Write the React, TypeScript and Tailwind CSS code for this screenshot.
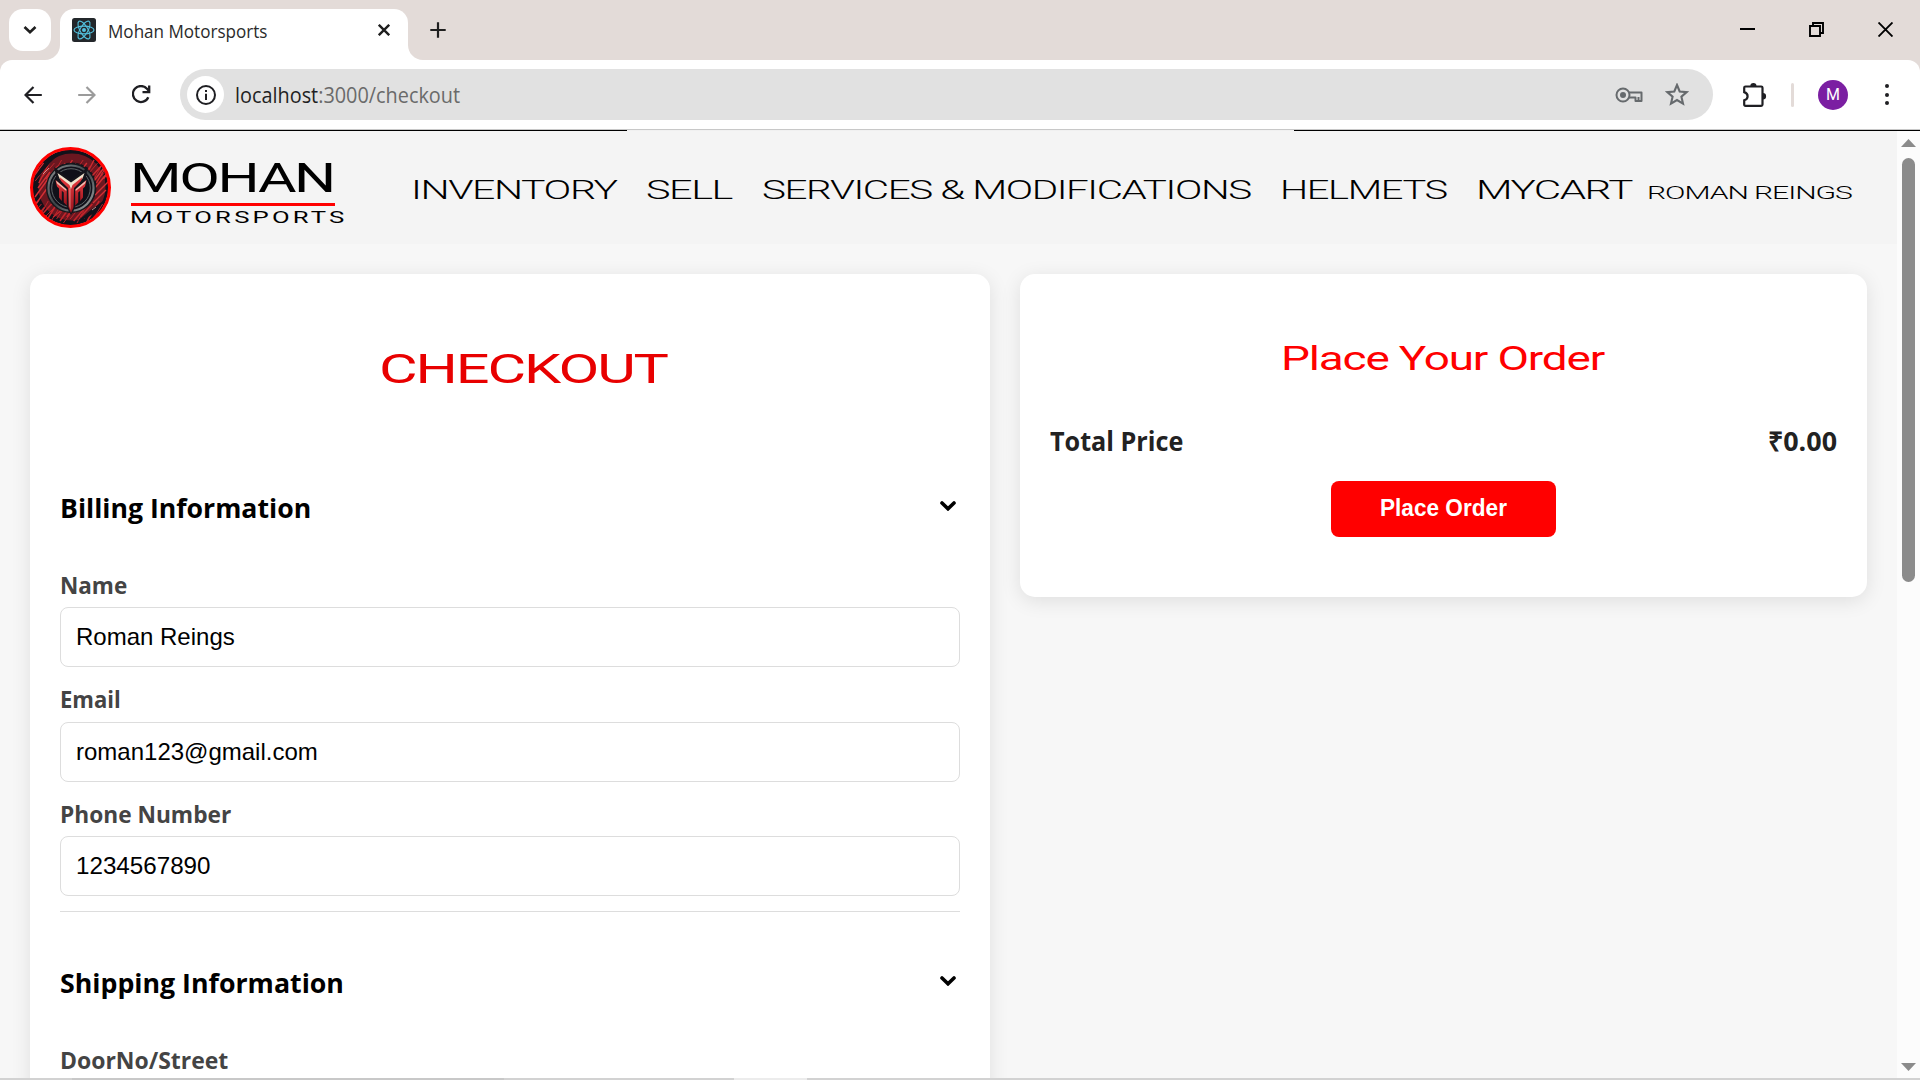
import React, { useLayoutEffect, useRef, useState } from "react";

/* One line of text stretched horizontally so that it fills its box. */
function Fit({ className, children }: { className: string; children: React.ReactNode }) {
  const box = useRef<HTMLDivElement>(null);
  const text = useRef<HTMLSpanElement>(null);
  const [scale, setScale] = useState(1);
  useLayoutEffect(() => {
    if (box.current && text.current && text.current.offsetWidth > 0) {
      setScale(box.current.getBoundingClientRect().width / text.current.offsetWidth);
    }
  }, []);
  return (
    <div ref={box} className={"shrink-0 whitespace-nowrap " + className}>
      <span ref={text} className="inline-block origin-left align-top" style={{ transform: `scaleX(${scale})` }}>
        {children}
      </span>
    </div>
  );
}

const WIDE = "font-['Roboto',sans-serif]";
const UI = "font-['Open_Sans',sans-serif]";
const ARIAL = "font-['Liberation_Sans',sans-serif]";

function TabStrip() {
  return (
    <div className="flex h-[60px] items-start bg-[#e3dbd8] pt-[9px]">
      <div className="ml-[9px] flex size-[42px] items-center justify-center rounded-[14px] bg-white">
        <svg width="14" height="10" viewBox="0 0 14 10" fill="none" stroke="#1f1f1f" strokeWidth="2.6">
          <path d="M1.5 2 7 7.3 12.500 2" />
        </svg>
      </div>
      <div className="relative ml-[9px] flex h-[51px] w-[348px] items-start rounded-t-[14px] bg-white pl-3">
        <svg className="absolute bottom-0 -left-[15px]" width="15" height="15" viewBox="0 0 15 15">
          <path d="M15 0V15H0C8.300 15 15 8.300 15 0Z" fill="#fff" />
        </svg>
        <svg className="absolute bottom-0 -right-[15px]" width="15" height="15" viewBox="0 0 15 15">
          <path d="M0 0V15H15C6.700 15 0 8.300 0 0Z" fill="#fff" />
        </svg>
        <svg className="mt-[9px]" width="24" height="24" viewBox="0 0 24 24" fill="none">
          <rect width="24" height="24" rx="2.500" fill="#23272b" />
          <g stroke="#53c1de" strokeWidth="1.100">
            <ellipse cx="12" cy="12" rx="10" ry="3.900" />
            <ellipse cx="12" cy="12" rx="10" ry="3.900" transform="rotate(60 12 12)" />
            <ellipse cx="12" cy="12" rx="10" ry="3.900" transform="rotate(120 12 12)" />
          </g>
          <circle cx="12" cy="12" r="2" fill="#53c1de" />
        </svg>
        <Fit className={"ml-[12px] mt-[7px] w-[160px] text-[17.500px] leading-[30px] text-[#2b2b2b] " + UI}>Mohan Motorsports</Fit>
        <svg className="ml-[110px] mt-[15px]" width="12" height="12" viewBox="0 0 12 12" stroke="#1f1f1f" strokeWidth="2.400">
          <path d="M.8.8 11.200 11.200M11.200.8.8 11.200" />
        </svg>
      </div>
      <svg className="ml-[22px] mt-[13px]" width="16" height="16" viewBox="0 0 16 16" stroke="#1f1f1f" strokeWidth="2.200">
        <path d="M8 .3V15.700M.3 8H15.700" />
      </svg>
      <div className="ml-auto flex items-center gap-[54px] pr-[27px] pt-[13px]">
        <svg width="15" height="15" viewBox="0 0 15 15"><path d="M0 6H15V8H0Z" fill="#000" /></svg>
        <svg width="15" height="15" viewBox="0 0 15 15" fill="none" stroke="#000" strokeWidth="1.900">
          <path d="M1 4H11V14H1ZM4 4V1H14V11H11" />
        </svg>
        <svg width="15" height="15" viewBox="0 0 15 15" stroke="#000" strokeWidth="1.900">
          <path d="M.5.5 14.500 14.500M14.500.5.5 14.500" />
        </svg>
      </div>
    </div>
  );
}

function Toolbar() {
  return (
    <div className="h-[69px] bg-[#e3dbd8]">
      <div className="flex h-full items-center rounded-t-[12px] bg-white pl-6">
        <svg width="18" height="18" viewBox="0 0 18 18" fill="none" stroke="#1f1f23" strokeWidth="2.200">
          <path d="M17.800 9H2M9.500 1 1.500 9 9.500 17" />
        </svg>
        <svg className="ml-9" width="18" height="18" viewBox="0 0 18 18" fill="none" stroke="#9b9b9b" strokeWidth="2.200">
          <path d="M.2 9H16M8.500 1 16.500 9 8.500 17" />
        </svg>
        <svg className="ml-9" width="19" height="19" viewBox="0 0 19 19" fill="none" stroke="#1f1f23" strokeWidth="2.300">
          <path d="M16.300 12.200A8 8 0 1 1 15 3.800L17.300 6.500" />
          <path d="M17.200.5V7.200H10.500" />
        </svg>
        <div className="ml-[29px] flex h-[51px] w-[1533px] shrink-0 items-center rounded-full bg-[#e1e1e1] pl-[7px] pr-[24px]">
          <div className="flex size-[37px] items-center justify-center rounded-full bg-white">
            <svg width="20" height="20" viewBox="0 0 20 20" fill="none" stroke="#1f1f23" strokeWidth="2">
              <circle cx="10" cy="10" r="9" />
              <path d="M10 8.800V15" />
              <path d="M10 5V7" />
            </svg>
          </div>
          <Fit className={"ml-[11px] w-[225px] text-[21px] leading-[30px] text-[#6a6a6a] " + UI}>
            <span className="text-[#1f1f23]">localhost</span>:3000/checkout
          </Fit>
          <svg className="ml-auto" width="28" height="16" viewBox="0 0 28 16" fill="none" stroke="#666a6d" strokeWidth="2">
            <circle cx="8" cy="8" r="6.500" />
            <circle cx="8" cy="8" r="3" fill="#666a6d" stroke="none" />
            <path d="M14 5.500H26.500V14H20.500V10.500H14M23.500 14V10" strokeLinejoin="round" />
          </svg>
          <svg className="ml-[22px] shrink-0" width="24" height="23" viewBox="0 0 24 23" fill="none" stroke="#666a6d" strokeWidth="2.100">
            <path d="M12 2 14.700 8.500 21.700 9.100 16.400 13.700 18 20.600 12 17 6 20.600 7.600 13.700 2.300 9.100 9.300 8.500Z" />
          </svg>
        </div>
        <svg className="ml-[29px] shrink-0" width="26" height="26" viewBox="0 0 26 26" fill="none">
          <path d="M3.500 4.500H19.200Q20.500 4.500 20.500 5.800V22.500Q20.500 23.800 19.200 23.800H3.500Q2.200 23.800 2.200 22.500V18.300Q5.600 17.300 5.600 14.200T2.200 10.100V5.800Q2.200 4.500 3.500 4.500Z" stroke="#1f1f23" strokeWidth="2.200" />
          <path d="M8.300 4.200A3.100 3.100 0 0 1 14.500 4.200ZM20.900 11A3.200 3.200 0 0 1 20.900 17.400Z" fill="#1f1f23" />
        </svg>
        <div className="ml-[23px] h-6 w-[3px] rounded-full bg-[#e3dbd8]" />
        <div className={"ml-6 flex size-[30px] items-center justify-center rounded-full bg-[#7b1fa2] text-[16px] text-white " + WIDE}>M</div>
        <div className="ml-[37px] flex flex-col gap-[4.300px]">
          <i className="size-1 rounded-full bg-[#1f1f23]" />
          <i className="size-1 rounded-full bg-[#1f1f23]" />
          <i className="size-1 rounded-full bg-[#1f1f23]" />
        </div>
      </div>
    </div>
  );
}

const STREAKS = Array.from({ length: 23 }, (_, i) => i);

function Emblem() {
  return (
    <svg className="ml-[30px] mt-4 shrink-0" width="81" height="81" viewBox="0 0 81 81" fill="none">
      <defs>
        <clipPath id="disc"><circle cx="40.500" cy="40.500" r="38" /></clipPath>
        <linearGradient id="steel" x1="0" y1="0" x2="1" y2="1">
          <stop offset="0" stopColor="#8a9092" />
          <stop offset=".5" stopColor="#3a4145" />
          <stop offset="1" stopColor="#a3a7a8" />
        </linearGradient>
        <linearGradient id="blade" x1="0" y1="0" x2="0" y2="1">
          <stop offset="0" stopColor="#e83c40" />
          <stop offset="1" stopColor="#98111b" />
        </linearGradient>
      </defs>
      <circle cx="40.500" cy="40.500" r="38" fill="#11111a" />
      <g clipPath="url(#disc)">
        <circle cx="42" cy="40" r="29" stroke="#a81d24" strokeWidth="9" opacity=".6" />
        {STREAKS.map((i) => (
          <g key={i}>
            <path d={`M${10 + i * 3.6} ${13 + (i % 3) * 3}L${i * 3.6 - 2} ${30 + (i % 4) * 2}`} stroke="#cf2b30" strokeWidth={i % 2 ? 1.4 : 0.8} />
            <path d={`M${8 + i * 3.4} ${54 + (i % 3) * 3}L${i * 3.4 - 4} ${70 + (i % 4) * 2}`} stroke="#c4262c" strokeWidth={i % 2 ? 0.9 : 1.5} />
          </g>
        ))}
        <path d="M6 57 18 40M5 50 18 32M8 41 20 25M64 34 76 18M65 41 78 25M65 48 79 34M63 56 76 43" stroke="#d43035" strokeWidth="1.400" />
        <path d="M6 30Q12 14 28 8L20 16 10 28Z" fill="#11111a" />
        <path d="M48 74Q66 69 73 54L62 62 50 72Z" fill="#11111a" />
        <path d="M13 27 19 21M62 63 66 60" stroke="#d9b0a8" strokeWidth=".8" />
      </g>
      <circle cx="41" cy="41" r="24" fill="#101019" stroke="#15181d" strokeWidth="2" />
      <circle cx="41" cy="41" r="22.500" stroke="url(#steel)" strokeWidth="2.200" />
      <circle cx="41" cy="41" r="19.300" stroke="#5d6467" strokeWidth="1" />
      <path d="M24 20 29 41 39 65 41 68 43 65 53 41 58 20 41 33Z" fill="#14141b" />
      {/* Pale bevel of the horns and the stem */}
      <path d="M27.500 26 41 35.500 54.500 26 52.500 31.500 42.500 39.500V43H39.500V39.500L29.500 31.500Z" fill="#efe2cc" />
      {/* Red face of the letter mark */}
      <path d="M29.500 30 39.500 38 41 42 42.500 38 52.500 30 51 34 44 41 43.500 60 41 66 38.500 60 38 41 31 34Z" fill="url(#blade)" />
      <path d="M40.300 41V63L39.600 59V41Z" fill="#f0c4b4" />
      <path d="M25.500 33 36.800 42.500V58.500L33.800 55.500V45.500L31.800 43.800V54L29 50.500V41.500L27 39.500ZM56.500 33 45.200 42.500V58.500L48.200 55.500V45.500L50.200 43.800V54L53 50.500V41.500L55 39.500Z" fill="url(#blade)" />
      <path d="M26 33.500 36.300 42.300V44L27 36.500ZM56 33.500 45.700 42.300V44L55 36.500Z" fill="#ecc2b2" />
      <circle cx="40.500" cy="40.500" r="39" stroke="#ff0000" strokeWidth="3" />
    </svg>
  );
}

function SiteHeader() {
  const nav = "mt-[44px] text-[26px] leading-[30px] font-[350] tracking-[-0.035em] " + WIDE;
  return (
    <header className="flex h-[113px] items-start bg-[#f4f4f4] text-black">
      <Emblem />
      <div className="ml-5 w-[214px] shrink-0">
        <Fit className={"mt-[28px] -ml-px w-[204px] text-[40px] leading-[40px] tracking-[-0.04em] " + WIDE}>MOHAN</Fit>
        <div className="mt-[4px] h-[3px] w-[204px] bg-[#ff0000]" />
        <Fit className={"mt-[2px] -ml-px w-[218px] text-[16px] leading-[20px] tracking-[2px] " + WIDE}>MOTORSPORTS</Fit>
      </div>
      <Fit className={"ml-[66px] w-[205px] " + nav}>INVENTORY</Fit>
      <Fit className={"ml-[30px] w-[86px] " + nav}>SELL</Fit>
      <Fit className={"ml-[30px] w-[488px] " + nav}>SERVICES &amp; MODIFICATIONS</Fit>
      <Fit className={"ml-[30px] w-[167px] " + nav}>HELMETS</Fit>
      <Fit className={"ml-[29px] w-[156px] " + nav}>MYCART</Fit>
      <Fit className={"ml-[15px] mt-[52px] w-[205px] text-[18.500px] leading-5 font-[350] tracking-[-0.035em] " + WIDE}>ROMAN REINGS</Fit>
    </header>
  );
}

function SectionTitle({ title, width }: { title: string; width: string }) {
  return (
    <div className="flex h-[40px] items-start justify-between text-black">
      <Fit className={"text-[27.500px] leading-[40px] font-bold " + UI + " " + width}>{title}</Fit>
      <svg className="mr-[4px] mt-[13px]" width="16" height="10" viewBox="0 0 16 10" fill="none" stroke="#000" strokeWidth="3.600" strokeLinecap="round">
        <path d="M2 2 8 7.800 14 2" />
      </svg>
    </div>
  );
}

function Field({ label, value, labelWidth, valueWidth, box }: { label: string; value: string; labelWidth: string; valueWidth: string; box: string }) {
  return (
    <div>
      <Fit className={"text-[23.500px] leading-[30px] font-bold text-[#444] " + UI + " " + labelWidth}>{label}</Fit>
      <div className={"flex h-[60px] items-center rounded-[8px] border border-[#ddd] pl-[15px] text-black " + box}>
        <Fit className={"text-[24px] leading-[30px] " + ARIAL + " " + valueWidth}>{value}</Fit>
      </div>
    </div>
  );
}

function BillingCard() {
  return (
    <section className="h-[900px] w-[960px] rounded-[15px] bg-white px-[30px] pt-[71px] shadow-[0_4px_20px_rgba(0,0,0,0.1)]">
      <Fit className={"ml-[319px] w-[288px] text-[40px] leading-[50px] font-[450] tracking-[-0.035em] text-[#e80000] " + WIDE}>CHECKOUT</Fit>
      <div className="mt-[93px]"><SectionTitle title="Billing Information" width="w-[251px]" /></div>
      <div className="mt-[42px]">
        <Field label="Name" value="Roman Reings" labelWidth="w-[67px]" valueWidth="w-[159px]" box="mt-[7px]" />
      </div>
      <div className="mt-[17px]">
        <Field label="Email" value="roman123@gmail.com" labelWidth="w-[61px]" valueWidth="w-[242px]" box="mt-[8px]" />
      </div>
      <div className="mt-[17px]">
        <Field label="Phone Number" value="1234567890" labelWidth="w-[171px]" valueWidth="w-[134px]" box="mt-[7px]" />
      </div>
      <div className="mt-[15px] h-px bg-[#ddd]" />
      <div className="mt-[51px]"><SectionTitle title="Shipping Information" width="w-[284px]" /></div>
      <Fit className={"mt-[42px] w-[168px] text-[23.500px] leading-[30px] font-bold text-[#444] " + UI}>DoorNo/Street</Fit>
    </section>
  );
}

function OrderCard() {
  return (
    <section className="flex h-[323px] w-[847px] flex-col items-center rounded-[15px] bg-white px-[30px] pt-[65px] shadow-[0_4px_20px_rgba(0,0,0,0.1)]">
      <Fit className={"mr-[3px] w-[323px] text-[32.500px] leading-[40px] font-[450] tracking-[-0.025em] text-[#ff0000] " + WIDE}>Place Your Order</Fit>
      <div className={"mt-[44px] flex w-full justify-between text-[26.500px] leading-[36px] font-bold text-[#222] " + UI}>
        <Fit className="w-[133px]">Total Price</Fit>
        <Fit className="w-[69px]">₹0.00</Fit>
      </div>
      <button className={"mt-[22px] flex h-[56px] w-[225px] justify-center rounded-[8px] bg-[#ff0000] pt-[12px] font-bold text-white " + ARIAL}>
        <Fit className="w-[127px] text-left text-[23.500px] leading-[30px]">Place Order</Fit>
      </button>
    </section>
  );
}

function Scrollbar() {
  return (
    <div className="flex w-[23px] flex-col items-center bg-[#fcfcfc] pt-2">
      <svg width="15" height="8" viewBox="0 0 15 8"><path d="M7.500 0 15 8H0Z" fill="#8b8b8b" /></svg>
      <div className="mt-[11px] h-[424px] w-[13px] rounded-full bg-[#8b8b8b]" />
      <svg className="mt-auto mb-[7px]" width="15" height="8" viewBox="0 0 15 8"><path d="M0 0H15L7.500 8Z" fill="#8b8b8b" /></svg>
    </div>
  );
}

export default function App() {
  return (
    <div className="flex h-[1080px] w-[1920px] flex-col overflow-hidden bg-white">
      <TabStrip />
      <Toolbar />
      <div className="h-px shrink-0 bg-[#c8c8c8]" />
      <div className="flex h-px shrink-0 justify-between bg-[#f0f0f0]">
        <div className="w-[627px] bg-black" />
        <div className="w-[626px] bg-black" />
      </div>
      <div className="flex h-[947px] shrink-0">
        <main className="w-[1897px] overflow-hidden bg-[#f7f7f7]">
          <SiteHeader />
          <div className="flex items-start gap-[30px] px-[30px] pt-[30px]">
            <BillingCard />
            <OrderCard />
          </div>
        </main>
        <Scrollbar />
      </div>
      <div className="flex h-[2px] shrink-0 bg-[#d2d2d2]">
        <div className="ml-[72px] w-[432px] bg-[#c8c8c8]" />
        <div className="ml-[230px] w-[73px] bg-[#ececec]" />
      </div>
    </div>
  );
}
